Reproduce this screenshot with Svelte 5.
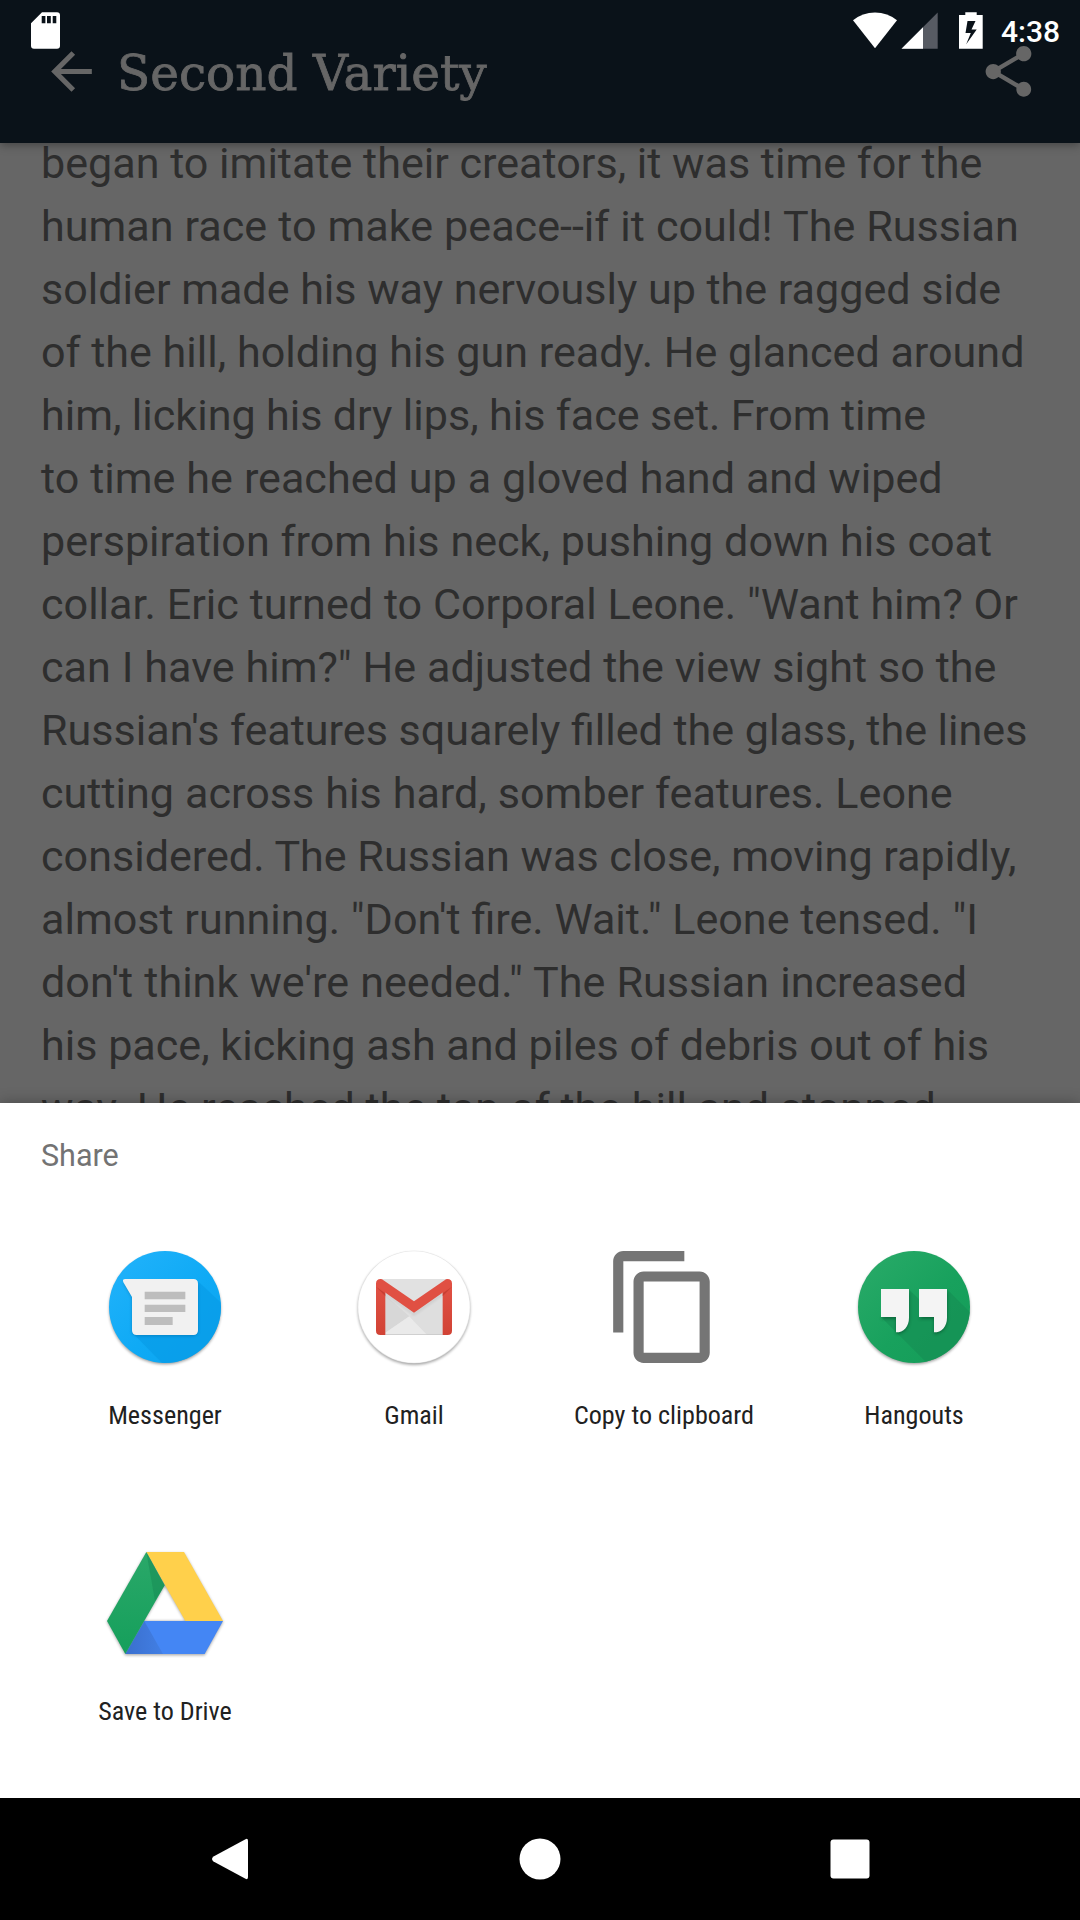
<script>
  // Each line carries its own word spacing in pixels.
  const lines = [
    ['began to imitate their creators, it was time for the', 0],
    ['human race to make peace--if it could! The Russian', 0.36],
    ['soldier made his way nervously up the ragged side', -0.08],
    ['of the hill, holding his gun ready. He glanced around', 0],
    ['him, licking his dry lips, his face set. From time', -0.36],
    ['to time he reached up a gloved hand and wiped', 0.25],
    ['perspiration from his neck, pushing down his coat', 0.2],
    ['collar. Eric turned to Corporal Leone. "Want him? Or', 0.12],
    ['can I have him?" He adjusted the view sight so the', 0.2],
    ["Russian's features squarely filled the glass, the lines", -0.12],
    ['cutting across his hard, somber features. Leone', 0.3],
    ['considered. The Russian was close, moving rapidly,', 0],
    ['almost running. "Don\'t fire. Wait." Leone tensed. "I', 0],
    ['don\'t think we\'re needed." The Russian increased', 0.5],
    ['his pace, kicking ash and piles of debris out of his', 0],
    ['way. He reached the top of the hill and stopped,', 0]
  ];
</script>

<div class="screen">
  <div class="status">
    <svg class="sd" viewBox="0 0 29 37"><path fill="#fff" fill-rule="evenodd" d="M11 0.300H26Q29 .3 29 3.300V33.700Q29 36.700 26 36.700H3Q0 36.700 0 33.700V11.200ZM10.700 4V11.200H14.400V4ZM16 4V11.200H19.800V4ZM21.700 4V11.200H25.300V4Z" /></svg>
    <svg class="signals" viewBox="0 0 132 37">
      <path fill="#fff" d="M0 8.200Q9.500.4 22 .4T44 8.200L22 36.200Z" />
      <path fill="#575b63" d="M48.500 36.700 84.700.5V36.700Z" />
      <path fill="#fff" d="M48.500 36.700 70 15.200V36.700Z" />
      <path fill="#fff" fill-rule="evenodd" d="M112.300.2H123.700V3H129.700V36.700H106V3H112.300ZM114.500 9 112.500 21H117.800L113.200 32.300 123.700 17.500H118.500L122.500 9Z" />
    </svg>
    <span class="clock">4:38</span>
  </div>

  <header>
    <svg class="glyph" viewBox="0 0 24 24"><path d="M20 11H7.830l5.590-5.590L12 4l-8 8 8 8 1.410-1.410L7.830 13H20v-2z" /></svg>
    <h1>Second Variety</h1>
    <svg class="glyph" viewBox="0 0 24 24"><path d="M18 16.080c-.76 0-1.440.3-1.960.77L8.910 12.700c.05-.23.09-.46.09-.7s-.04-.47-.09-.7l7.050-4.110c.54.5 1.250.81 2.040.81 1.660 0 3-1.340 3-3s-1.340-3-3-3-3 1.340-3 3c0 .24.040.47.090.7L8.040 9.810C7.500 9.310 6.790 9 6 9c-1.660 0-3 1.340-3 3s1.340 3 3 3c.79 0 1.500-.31 2.040-.81l7.120 4.160c-.05.21-.08.43-.08.65 0 1.610 1.310 2.920 2.920 2.920s2.920-1.310 2.920-2.920-1.310-2.920-2.920-2.920z" /></svg>
  </header>

  <article>
    {#each lines as [text, spacing]}
      <p style:word-spacing="{spacing}px">{text}</p>
    {/each}
  </article>

  <section class="sheet">
    <h2>Share</h2>
    <div class="apps">
      <div class="app">
        <svg viewBox="72 78 366 366">
          <defs>
            <linearGradient id="msg" x1="0" y1="0" x2="1" y2="1"><stop offset="0" stop-color="#23b3fb" /><stop offset=".55" stop-color="#0faaf5" /><stop offset="1" stop-color="#0ba3ee" /></linearGradient>
            <clipPath id="msgc"><circle cx="255" cy="261" r="168" /></clipPath>
            <filter id="soft" x="-20%" y="-20%" width="140%" height="150%"><feGaussianBlur stdDeviation="4" /></filter>
          </defs>
          <circle cx="255" cy="266" r="167" fill="#000" opacity=".4" filter="url(#soft)" />
          <circle cx="255" cy="261" r="168" fill="url(#msg)" />
          <g clip-path="url(#msgc)">
            <path d="M350 180 500 320V520H335L160 341Z" fill="#079be6" opacity=".65" />
            <path d="M130 186 156 232V331Q156 347 172 347H338Q354 347 354 331V195" fill="#045a90" opacity=".45" filter="url(#soft)" />
          </g>
          <path d="M136 177H340Q354 177 354 191V331Q354 345 340 345H170Q156 345 156 331V231L130 187Q126 177 136 177Z" fill="#f1f1f1" />
          <path d="M194 215H316V238H194ZM194 254H316V276H194ZM194 291H278V315H194Z" fill="#bdbdbd" />
        </svg>
        <span>Messenger</span>
      </div>
      <div class="app">
        <svg viewBox="39 78 366 366">
          <defs><linearGradient id="gm" x1="0" y1="0" x2="0" y2="1"><stop offset="0" stop-color="#e15144" /><stop offset="1" stop-color="#d14335" /></linearGradient></defs>
          <circle cx="222" cy="266" r="168" fill="#000" opacity=".38" filter="url(#soft)" />
          <circle cx="222" cy="261" r="169" fill="#e4e4e4" />
          <circle cx="222" cy="261" r="167" fill="#fff" />
          <path d="M122 177H322V345H122Z" fill="#e1e1e1" />
          <path d="M136 226 208 289 136 338Z" fill="#d7d7d7" />
          <path d="M136 338 208 289 262 345H136Z" fill="#eaeaea" />
          <path d="M208 289 308 222V345H262Z" fill="#dedede" />
          <path d="M136 343H308V345H136Z" fill="#c7c7c7" />
          <path d="M136 217 222 280 308 217V224L222 286 136 224Z" fill="#000" opacity=".12" filter="url(#soft)" />
          <path d="M108 190H136V345H121Q108 345 108 332ZM308 190H336V332Q336 345 323 345H308Z" fill="url(#gm)" />
          <path d="M108 200 136 220V229ZM336 200 308 220V229Z" fill="#b93629" opacity=".6" />
          <path d="M108 191Q108 177 122 177L126 178 222 244 318 178 322 177Q336 177 336 191C336 197 335 199 331 202L222 278 113 202C109 199 108 197 108 191Z" fill="#e05043" />
        </svg>
        <span>Gmail</span>
      </div>
      <div class="app">
        <svg viewBox="0 0 24 24"><path fill="#757575" d="M16 1H4c-1.100 0-2 .9-2 2v14h2V3h12V1zm3 4H8c-1.100 0-2 .9-2 2v14c0 1.100.9 2 2 2h11c1.100 0 2-.9 2-2V7c0-1.100-.9-2-2-2zm0 16H8V7h11v14z" /></svg>
        <span>Copy to clipboard</span>
      </div>
      <div class="app">
        <svg viewBox="39 78 366 366">
          <defs>
            <linearGradient id="hg" x1="0" y1="0" x2="1" y2="1"><stop offset="0" stop-color="#2aab69" /><stop offset=".55" stop-color="#18a15d" /><stop offset="1" stop-color="#149c58" /></linearGradient>
            <clipPath id="hgc"><circle cx="222" cy="261" r="168" /></clipPath>
          </defs>
          <circle cx="222" cy="266" r="167" fill="#000" opacity=".4" filter="url(#soft)" />
          <circle cx="222" cy="261" r="168" fill="url(#hg)" />
          <g clip-path="url(#hgc)">
            <path d="M320 207 460 347V520H352L123 291 168 291 207 209 237 238Z" fill="#168f54" opacity=".65" />
            <path d="M123 297H168V342C192 342 208 322 208 296V215M237 297H282V342C306 342 322 322 322 296V215" fill="#053f22" opacity=".5" filter="url(#soft)" />
          </g>
          <path d="M123 207H207V293C207 320 191 337 168 337V291H123ZM237 207H321V293C321 320 305 337 282 337V291H237Z" fill="#f4f4f4" />
        </svg>
        <span>Hangouts</span>
      </div>
      <div class="app">
        <svg viewBox="72 36 366 366">
          <defs>
            <linearGradient id="dg" x1="0" y1="0" x2="0" y2="1"><stop offset="0" stop-color="#2aa869" /><stop offset="1" stop-color="#159f5b" /></linearGradient>
            <linearGradient id="ds" x1="0" y1="0" x2="1" y2="0"><stop offset="0" stop-color="#3a6fce" /><stop offset="1" stop-color="#427fe4" /></linearGradient>
          </defs>
          <path d="M199 70H312L429 276 374 376H136L81 276ZM254 168 193 273H316Z" fill="#000" fill-rule="evenodd" opacity=".35" filter="url(#soft)" />
          <path d="M193 273H429L374 372H136Z" fill="#4486f4" />
          <path d="M193 273 249 372H136Z" fill="url(#ds)" />
          <path d="M199 66H312L429 273H316Z" fill="#ffd04b" />
          <path d="M199 66 254 166 136 372 81 273Z" fill="url(#dg)" />
          <path d="M199 66 254 166 225 212Z" fill="#148250" opacity=".4" />
        </svg>
        <span>Save to Drive</span>
      </div>
    </div>
  </section>

  <nav>
    <svg viewBox="0 0 42 42"><path d="M36.500 1.200Q39 0 39 3V39Q39 42 36.500 40.800L4.500 23.500Q1.500 21 4.500 18.500Z" /></svg>
    <svg viewBox="0 0 42 42"><circle cx="21" cy="21" r="20.500" /></svg>
    <svg viewBox="0 0 42 42"><rect x="1.500" y="1.500" width="39" height="39" rx="3" /></svg>
  </nav>
</div>

<style>
  :global(body) { margin: 0; }
  .screen {
    position: relative;
    width: 1080px;
    height: 1920px;
    display: flex;
    flex-direction: column;
    overflow: hidden;
    background: #666;
    font-family: Roboto, "Liberation Sans", sans-serif;
  }
  svg { display: block; overflow: visible; flex: none; }
  .status {
    position: absolute;
    inset: 0 0 auto 0;
    z-index: 2;
    height: 61px;
    box-sizing: border-box;
    padding: 12px 21px 0 31px;
    display: flex;
    align-items: flex-start;
  }
  .sd { width: 29px; height: 37px; }
  .signals { width: 132px; height: 37px; margin-left: auto; }
  .clock {
    width: 58px;
    margin-left: 16px;
    padding-top: 2px;
    color: #fff;
    font-size: 30px;
    font-weight: 500;
    line-height: 35px;
    white-space: nowrap;
  }
  header {
    position: relative;
    z-index: 1;
    height: 143px;
    flex: none;
    box-sizing: border-box;
    padding: 0 41px;
    display: flex;
    align-items: center;
    background: #0a1219;
    box-shadow: 0 2px 9px rgba(0, 0, 0, .35);
  }
  .glyph { width: 61px; height: 61px; fill: #666; }
  h1 {
    flex: 1;
    margin: 0 0 0 15px;
    padding-top: 4px;
    color: #666;
    font: 400 48.500px/61px "Roboto Slab", "DejaVu Serif", serif;
    -webkit-text-stroke: .8px #666;
    white-space: nowrap;
  }
  article {
    height: 960px;
    overflow: hidden;
    box-sizing: border-box;
    padding-left: 41px;
    color: #2e2e2e;
    font-size: 43.100px;
    line-height: 63px;
    white-space: nowrap;
  }
  p { margin: 0; }
  p:first-child { margin-top: -11px; }
  .sheet {
    position: relative;
    z-index: 1;
    height: 695px;
    flex: none;
    background: #fff;
    box-shadow: 0 0 14px rgba(0, 0, 0, .3);
  }
  h2 {
    margin: 0;
    padding: 35px 41px 0;
    color: #737373;
    font-size: 30.500px;
    font-weight: 400;
    line-height: 36px;
  }
  .apps {
    display: grid;
    grid-template-columns: 250px 248px 252px 248px;
    grid-auto-rows: 296px;
    padding: 72px 0 0 40px;
  }
  .app { display: flex; flex-direction: column; align-items: center; }
  .app svg { width: 122px; height: 122px; }
  .app span {
    margin-top: 31px;
    color: #212121;
    font-family: "Roboto Condensed", Roboto, sans-serif;
    font-stretch: 75%;
    font-size: 26.100px;
    line-height: 32px;
    white-space: nowrap;
  }
  nav {
    height: 122px;
    flex: none;
    display: flex;
    align-items: center;
    justify-content: space-between;
    box-sizing: border-box;
    padding: 0 209px;
    background: #000;
  }
  nav svg { width: 42px; height: 42px; fill: #fff; }
</style>
